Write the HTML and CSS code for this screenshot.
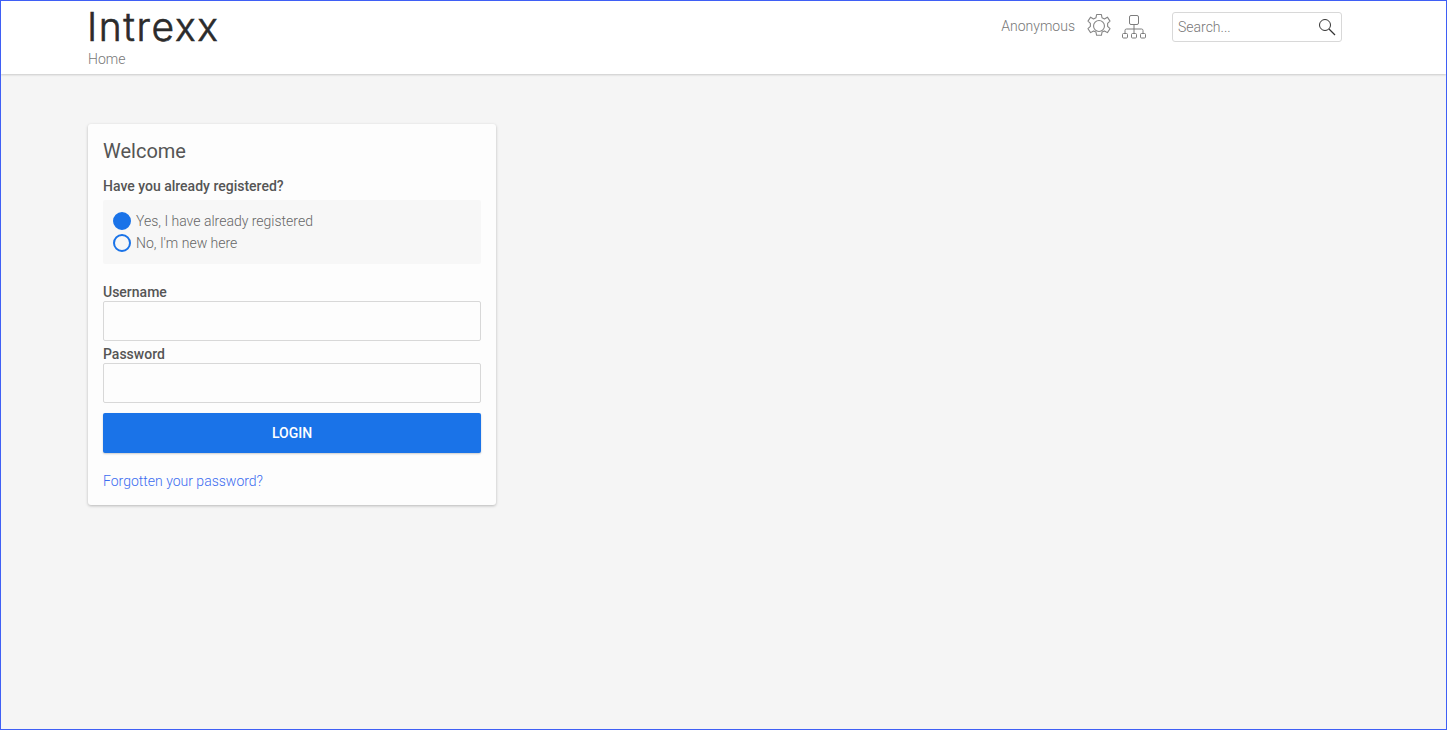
FILE: index.html
```html
<!DOCTYPE html>
<html lang="en">
<head>
<meta charset="utf-8">
<title>Intrexx</title>
<link rel="stylesheet" href="styles.css">
</head>
<body>
<div class="frame">
  <header class="header">
    <div class="header-inner">
      <div class="brand">
        <div class="logo">Intrexx</div>
        <nav class="crumb">Home</nav>
      </div>
      <div class="tools">
        <span class="user">Anonymous</span>
        <svg class="icon gear" width="24" height="24" viewBox="1 1 22 22" fill="none" stroke="#858585" stroke-width="1">
          <circle cx="12" cy="12" r="5"/>
          <path d="M9.8 1.5h4.4l.6 3 2.2 1 2.7-1.6 2.4 3.6-2.2 2.1v2.8l2.2 2.1-2.4 3.6-2.7-1.6-2.2 1-.6 3H9.8l-.6-3-2.2-1-2.7 1.6-2.4-3.6 2.2-2.1v-2.8L1.9 7.5l2.4-3.6L7 5.5l2.2-1z" stroke-linejoin="round"/>
        </svg>
        <svg class="icon tree" width="24" height="24" viewBox="0 0 24 24" fill="none" stroke="#7d7d7d" stroke-width="1">
          <rect x="7.5" y="0.5" width="9" height="9" rx="1.5"/>
          <path d="M12 9.5v8.5M3 18v-2.5a1.5 1.5 0 0 1 1.5-1.5h15a1.5 1.5 0 0 1 1.5 1.5v2.5"/>
          <rect x="0.5" y="18.5" width="5" height="4.5" rx="1"/>
          <rect x="9.5" y="18.5" width="5" height="4.5" rx="1"/>
          <rect x="18.5" y="18.5" width="5" height="4.5" rx="1"/>
        </svg>
        <div class="search">
          <span class="search-text">Search...</span>
          <svg width="18" height="18" viewBox="0 0 18 18" fill="none" stroke="#333" stroke-width="1">
            <circle cx="7" cy="7" r="5.5"/>
            <path d="M11 11l6 6" stroke-width="1.3"/>
          </svg>
        </div>
      </div>
    </div>
  </header>
  <main class="main">
    <section class="card">
      <h1 class="title">Welcome</h1>
      <div class="question">Have you already registered?</div>
      <div class="radios">
        <div class="radio-row"><span class="radio radio-on"></span><span>Yes, I have already registered</span></div>
        <div class="radio-row"><span class="radio"></span><span>No, I'm new here</span></div>
      </div>
      <div class="field field-first">
        <div class="field-label">Username</div>
        <div class="input"></div>
      </div>
      <div class="field">
        <div class="field-label">Password</div>
        <div class="input"></div>
      </div>
      <div class="button">LOGIN</div>
      <a class="forgot" href="#">Forgotten your password?</a>
    </section>
  </main>
</div>
</body>
</html>
```
FILE: styles.css
```css
* { box-sizing: border-box; }
html, body { margin: 0; height: 100%; }
body { font-family: Roboto, "Liberation Sans", sans-serif; color: #555; }
.frame {
  height: 730px;
  border: 1px solid #3f5ff5;
  background: #f5f5f5;
  display: flex;
  flex-direction: column;
  overflow: hidden;
}
.header {
  height: 73px;
  background: #fff;
  box-shadow: 0 1px 2px rgba(0,0,0,.18);
  padding: 0 104px 0 87px;
  flex: none;
}
.header-inner { display: flex; justify-content: space-between; align-items: flex-start; }
.logo {
  font-family: Inter, sans-serif;
  font-weight: 300;
  font-size: 39px;
  line-height: 32px;
  height: 32px;
  margin-top: 10px;
  margin-left: -1px;
  color: #2b2b2b;
  letter-spacing: 1.6px;
  white-space: nowrap;
  -webkit-text-stroke: .6px #2b2b2b;
}
.crumb { font-size: 14px; font-weight: 300; color: #777; line-height: 16px; margin-top: 8px; }
.tools { display: flex; align-items: center; margin-top: 11px; height: 30px; }
.user { font-size: 14px; font-weight: 300; color: #777; margin-right: 12px; position: relative; top: -1px; }
.icon { flex: none; }
.gear { margin-right: 11px; position: relative; top: -1px; }
.tree { margin-right: 26px; }
.search {
  width: 170px;
  height: 30px;
  border: 1px solid #d8d8d8;
  border-radius: 3px;
  background: #fff;
  display: flex;
  align-items: center;
  justify-content: space-between;
  padding: 0 5px;
}
.search-text { font-size: 14px; font-weight: 300; color: #777; }
.main { padding: 50px 0 0 87px; }
.card {
  width: 408px;
  height: 381px;
  background: #fdfdfd;
  border-radius: 3px;
  box-shadow: 0 1px 3px rgba(0,0,0,.25);
  padding: 15px;
}
.title { margin: 0; font-size: 20px; font-weight: 400; line-height: 24px; color: #555; }
.question { font-size: 14px; font-weight: 500; line-height: 16px; margin-top: 15px; color: #555; }
.radios {
  margin-top: 6px;
  height: 64px;
  background: #f7f7f7;
  border-radius: 2px;
  padding: 11px 10px 0;
  display: flex;
  flex-direction: column;
  gap: 2px;
}
.radio-row {
  display: flex;
  align-items: center;
  gap: 5px;
  height: 20px;
  font-size: 14px;
  font-weight: 300;
  color: #666;
}
.radio {
  width: 18px;
  height: 18px;
  border-radius: 50%;
  border: 2.5px solid #1a73e8;
  flex: none;
}
.radio-on { background: #1a73e8; }
.field-first { margin-top: 20px; }
.field { margin-bottom: 5px; }
.field-label { font-size: 14px; font-weight: 500; line-height: 16px; color: #555; margin-bottom: 1px; }
.input {
  height: 40px;
  border: 1px solid #d8d8d8;
  border-radius: 2px;
  background: #fdfdfd;
}
.button {
  margin-top: 10px;
  height: 40px;
  background: #1a73e8;
  border-radius: 2px;
  box-shadow: 0 1px 2px rgba(0,0,0,.2);
  color: #fff;
  font-size: 14px;
  font-weight: 500;
  display: flex;
  align-items: center;
  justify-content: center;
}
.forgot {
  display: block;
  margin-top: 20px;
  font-size: 14px;
  font-weight: 300;
  line-height: 16px;
  color: #3b6cf0;
  text-decoration: none;
}
```
